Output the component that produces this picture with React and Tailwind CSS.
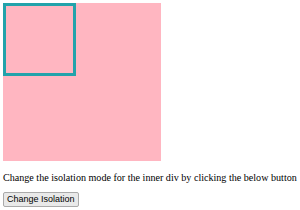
export default function App() {
  return (
    <div className="p-[3px] font-['Liberation_Serif',serif] text-black">
      <div className="w-[158px] h-[158px] bg-[#ffb6c1]">
        <div className="w-[73px] h-[73px] border-[3px] border-[#22a3ab]" />
      </div>
      <p className="mt-[11px] text-[10.1px] leading-[12px] whitespace-nowrap">
        Change the isolation mode for the inner div by clicking the below button
      </p>
      <button className="mt-[8px] h-[15px] px-[3px] text-[9px] leading-[13px] font-['Liberation_Sans',sans-serif] bg-[#e9e9e9] border border-[#aaa] rounded-[2px]">
        Change Isolation
      </button>
    </div>
  );
}
